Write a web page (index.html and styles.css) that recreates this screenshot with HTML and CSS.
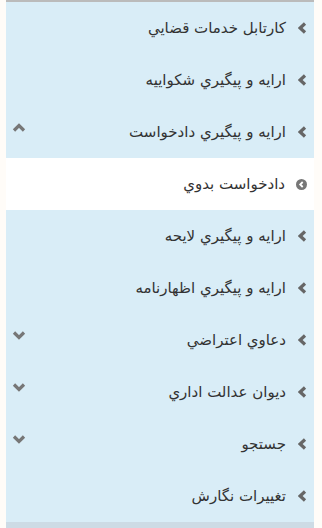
FILE: index.html
```html
<!DOCTYPE html>
<html lang="fa" dir="rtl">
<head>
<meta charset="utf-8">
<link rel="stylesheet" href="styles.css">
</head>
<body>
<nav class="menu">
  <div class="row"><svg class="chev" viewBox="0 0 9 12"><polyline points="7,1.5 2.2,6 7,10.5"/></svg><span class="label">كارتابل خدمات قضايي</span></div>
  <div class="row"><svg class="chev" viewBox="0 0 9 12"><polyline points="7,1.5 2.2,6 7,10.5"/></svg><span class="label">ارايه و پيگيري شكواييه</span></div>
  <div class="row"><svg class="chev" viewBox="0 0 9 12"><polyline points="7,1.5 2.2,6 7,10.5"/></svg><span class="label">ارايه و پيگيري دادخواست</span><svg class="caret" viewBox="0 0 14 9"><polyline points="2,7.5 7,2.5 12,7.5"/></svg></div>
  <div class="row sub"><svg class="circ" viewBox="0 0 11 11"><circle cx="5.5" cy="5.5" r="5.5"/><polyline points="6.7,3 4.2,5.5 6.7,8"/></svg><span class="label">دادخواست بدوي</span></div>
  <div class="row"><svg class="chev" viewBox="0 0 9 12"><polyline points="7,1.5 2.2,6 7,10.5"/></svg><span class="label">ارايه و پيگيري لايحه</span></div>
  <div class="row"><svg class="chev" viewBox="0 0 9 12"><polyline points="7,1.5 2.2,6 7,10.5"/></svg><span class="label">ارايه و پيگيري اظهارنامه</span></div>
  <div class="row"><svg class="chev" viewBox="0 0 9 12"><polyline points="7,1.5 2.2,6 7,10.5"/></svg><span class="label">دعاوي اعتراضي</span><svg class="caret" viewBox="0 0 14 9"><polyline points="2,1.5 7,6.5 12,1.5"/></svg></div>
  <div class="row"><svg class="chev" viewBox="0 0 9 12"><polyline points="7,1.5 2.2,6 7,10.5"/></svg><span class="label">ديوان عدالت اداري</span><svg class="caret" viewBox="0 0 14 9"><polyline points="2,1.5 7,6.5 12,1.5"/></svg></div>
  <div class="row"><svg class="chev" viewBox="0 0 9 12"><polyline points="7,1.5 2.2,6 7,10.5"/></svg><span class="label">جستجو</span><svg class="caret" viewBox="0 0 14 9"><polyline points="2,1.5 7,6.5 12,1.5"/></svg></div>
  <div class="row"><svg class="chev" viewBox="0 0 9 12"><polyline points="7,1.5 2.2,6 7,10.5"/></svg><span class="label">تغييرات نگارش</span></div>
</nav>
</body>
</html>
```

FILE: styles.css
```css
html, body {
  margin: 0;
  padding: 0;
  background: #fffcf8;
}
body {
  font-family: "DejaVu Sans", "Noto Sans", sans-serif;
  font-size: 15px;
  color: #333;
}
.menu {
  margin: 0 8px 0 6px;
  background: #d9edf7;
  border-top: 2px solid #bbbbbb;
  border-bottom: 6px solid #cddbe5;
}
.row {
  display: flex;
  align-items: center;
  height: 52px;
  padding-right: 7px;
  padding-left: 6px;
}
.row.sub {
  background: #fff;
}
.chev {
  width: 9px;
  height: 12px;
  flex: none;
  margin-left: 12px;
}
.chev polyline {
  fill: none;
  stroke: #666;
  stroke-width: 3.2;
  stroke-linecap: butt;
  stroke-linejoin: miter;
}
.circ {
  width: 11px;
  height: 11px;
  flex: none;
  margin-left: 11px;
}
.circ circle {
  fill: #777;
}
.circ polyline {
  fill: none;
  stroke: #fff;
  stroke-width: 1.8;
}
.label {
  white-space: nowrap;
}
.caret {
  width: 14px;
  height: 9px;
  flex: none;
  margin-right: auto;
  margin-bottom: 9px;
}
.caret polyline {
  fill: none;
  stroke: #777;
  stroke-width: 3.2;
}
```
